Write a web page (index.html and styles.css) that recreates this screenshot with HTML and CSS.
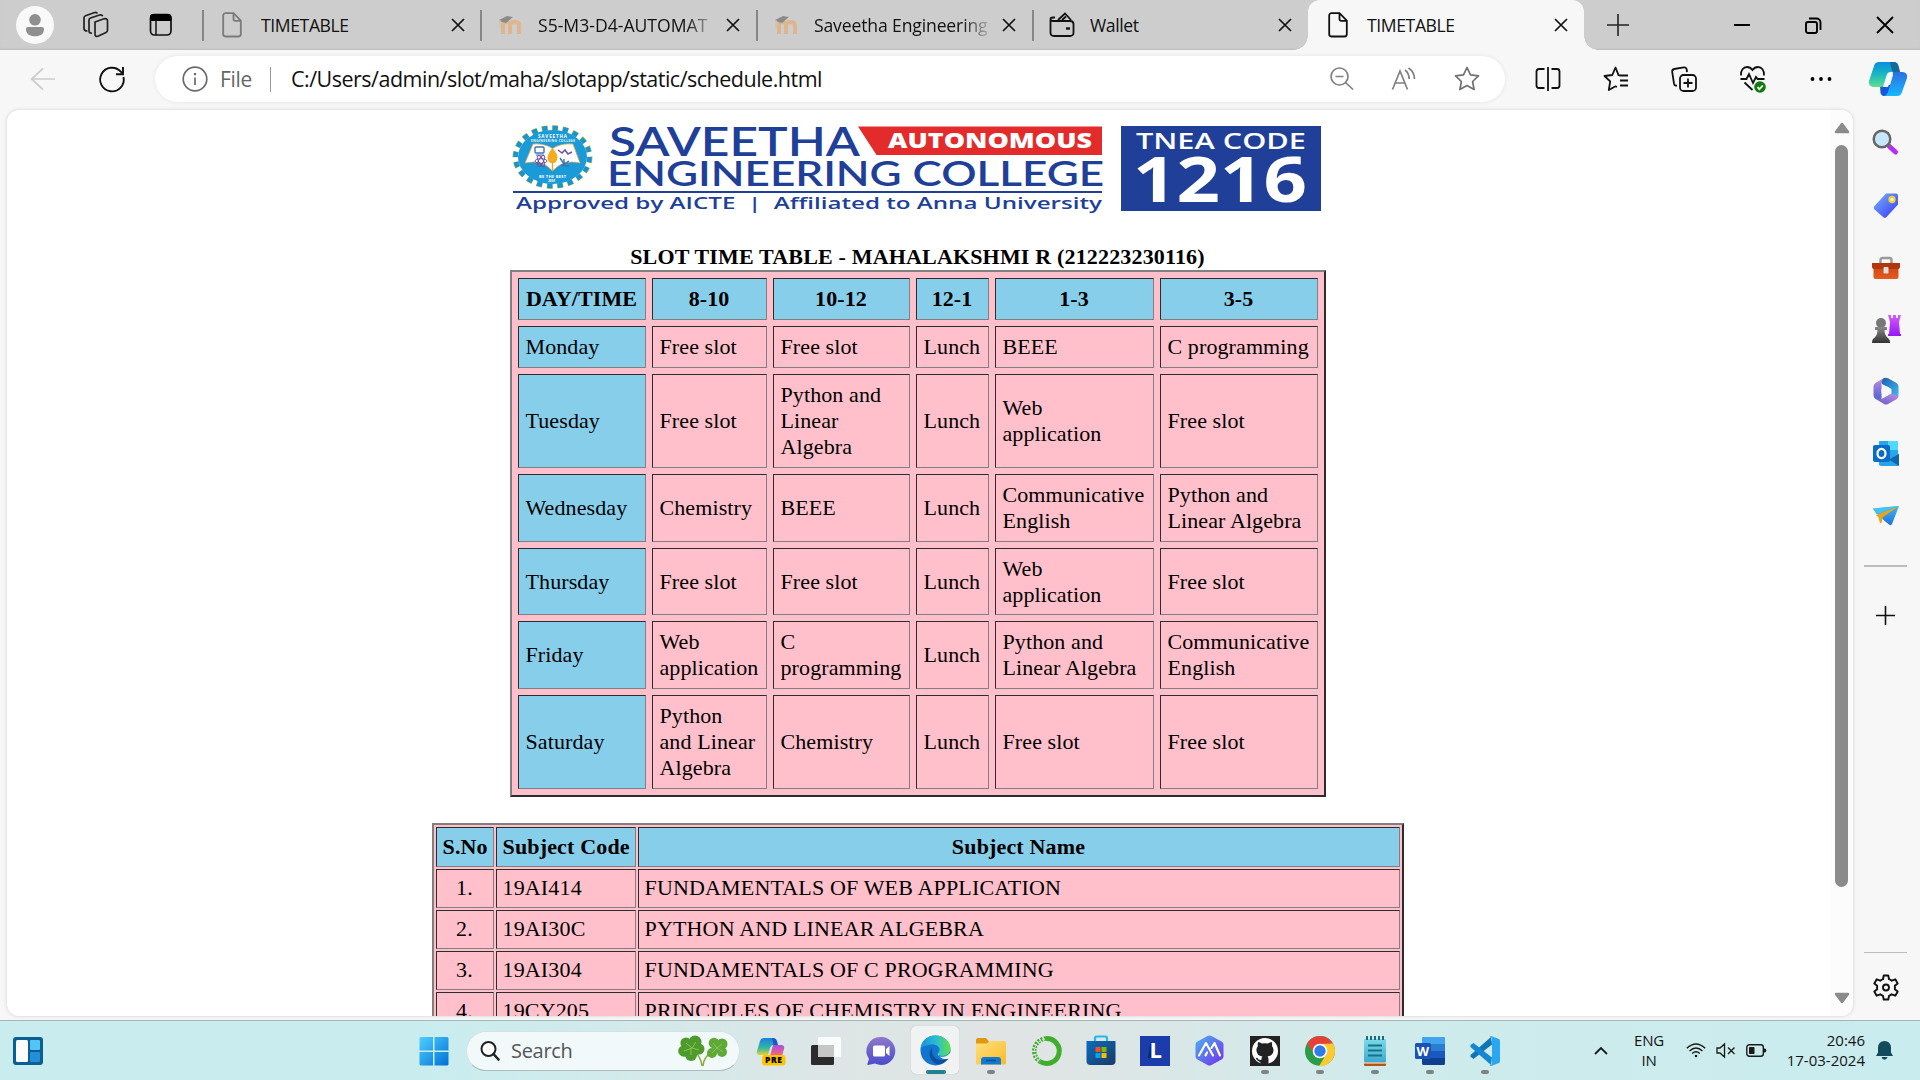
FILE: index.html
```html
<!DOCTYPE html>
<html lang="en">
<head>
<meta charset="utf-8">
<title>TIMETABLE</title>
<link rel="stylesheet" href="styles.css">
</head>
<body>
<svg class="defs" width="0" height="0" aria-hidden="true">
  <defs>
    <symbol id="close" viewBox="0 0 14 14"><path d="M1 1l12 12M13 1L1 13" fill="none" stroke="#111" stroke-width="1.7"/></symbol>
    <symbol id="page" viewBox="0 0 20 26"><path d="M3 1.2h8.500L18.800 8.500V22a2.500 2.500 0 0 1-2.500 2.500H3.500A2.500 2.500 0 0 1 1.200 22V3.500A2.300 2.300 0 0 1 3.500 1.200zM11.500 1.500V7a1.800 1.800 0 0 0 1.800 1.800h5.200" fill="none" stroke="currentColor" stroke-width="1.800"/></symbol>
    <symbol id="moodle" viewBox="0 0 26 20"><path d="M6 19V10q0-3 3.500-3t3.500 3v9M13 10q0-3 4.500-3t4.500 3v9" fill="none" stroke="#dfb58e" stroke-width="4"/><path d="M2 5l8-4 6 1-7 6-4-1z" fill="#8b8b8b"/><path d="M3 5v8" stroke="#d3bda9" stroke-width="1"/></symbol>
    <linearGradient id="gb" x1="0" y1="0" x2="1" y2="1"><stop offset="0" stop-color="#4fcfff"/><stop offset="1" stop-color="#0071d4"/></linearGradient>
    <linearGradient id="gtag" x1="0" y1="0" x2="1" y2="1"><stop offset="0" stop-color="#72b7ff"/><stop offset="1" stop-color="#3b35f0"/></linearGradient>
    <linearGradient id="gpurple" x1="0" y1="0" x2="0" y2="1"><stop offset="0" stop-color="#d35cff"/><stop offset="1" stop-color="#9618f0"/></linearGradient>
    <linearGradient id="gdark" x1="0" y1="0" x2="0" y2="1"><stop offset="0" stop-color="#888"/><stop offset="1" stop-color="#333"/></linearGradient>
    <linearGradient id="gcop1" x1="0" y1="0" x2="0" y2="1"><stop offset="0" stop-color="#0a8fdc"/><stop offset=".5" stop-color="#18b8c0"/><stop offset="1" stop-color="#5fe08c"/></linearGradient>
    <linearGradient id="gcop2" x1="0" y1="0" x2="0" y2="1"><stop offset="0" stop-color="#2b6fe0"/><stop offset="1" stop-color="#17b8ff"/></linearGradient>
    <linearGradient id="gpre1" x1="0" y1="0" x2="0" y2="1"><stop offset="0" stop-color="#1a7fe0"/><stop offset=".6" stop-color="#35b8a0"/><stop offset="1" stop-color="#f0d030"/></linearGradient>
    <linearGradient id="gpre2" x1="0" y1="0" x2="0" y2="1"><stop offset="0" stop-color="#a84fe8"/><stop offset="1" stop-color="#ff6a6a"/></linearGradient>
    <linearGradient id="gchat" x1="0" y1="0" x2="0" y2="1"><stop offset="0" stop-color="#8f78c8"/><stop offset="1" stop-color="#4a4ccc"/></linearGradient>
    <linearGradient id="gedge" x1="0" y1="0" x2="1" y2="0"><stop offset="0" stop-color="#1a8fdd"/><stop offset=".5" stop-color="#27bcd4"/><stop offset="1" stop-color="#62e04c"/></linearGradient>
    <linearGradient id="gfold" x1="0" y1="0" x2="1" y2="1"><stop offset="0" stop-color="#ffe080"/><stop offset="1" stop-color="#f9bb28"/></linearGradient>
    <linearGradient id="gstore" x1="0" y1="0" x2="1" y2="1"><stop offset="0" stop-color="#0a6cc0"/><stop offset="1" stop-color="#1b3a66"/></linearGradient>
    <linearGradient id="gam" x1="0" y1="0" x2="1" y2="1"><stop offset="0" stop-color="#4db2f5"/><stop offset="1" stop-color="#7030e8"/></linearGradient>
    <linearGradient id="gnote" x1="0" y1="0" x2="0" y2="1"><stop offset="0" stop-color="#7adbe8"/><stop offset="1" stop-color="#3fa9cc"/></linearGradient>
    <linearGradient id="gsky" x1="0" y1="0" x2="0" y2="1"><stop offset="0" stop-color="#3fb8f0"/><stop offset="1" stop-color="#2070e0"/></linearGradient>
    <linearGradient id="gbag" x1="0" y1="0" x2="0" y2="1"><stop offset="0" stop-color="#c8430f"/><stop offset="1" stop-color="#e55a20"/></linearGradient>
    <linearGradient id="gm1" x1="0" y1="0" x2="0" y2="1"><stop offset="0" stop-color="#c48be0"/><stop offset="1" stop-color="#4a60d0"/></linearGradient>
    <linearGradient id="gm2" x1="0" y1="0" x2="1" y2="1"><stop offset="0" stop-color="#1b5fae"/><stop offset="1" stop-color="#45bdf0"/></linearGradient>
    <linearGradient id="gm3" x1="0" y1="1" x2="1" y2="0"><stop offset="0" stop-color="#5b5cc8"/><stop offset="1" stop-color="#c68be0"/></linearGradient>
  </defs>
</svg>

<header class="tabstrip">
  <div class="strip-left">
    <svg class="avatar" width="38" height="38" viewBox="0 0 38 38"><circle cx="19" cy="19" r="19" fill="#f9f9f9"/><circle cx="19" cy="13.800" r="5.800" fill="#8f8f8f"/><path d="M10 23a2 2 0 0 1 2-2h14a2 2 0 0 1 2 2c0 5-3.500 7.300-9 7.300S10 28 10 23z" fill="#8f8f8f"/></svg>
    <svg class="spaces" width="28" height="28" viewBox="0 0 28 28" fill="none" stroke="#222" stroke-width="1.700"><path d="M13 11l9-3.200q3.500-.8 3.500 2v9.500q0 1.600-1.500 2.200l-7.500 3.500q-3.500 1.200-3.500-1.800z"/><path d="M10 22q-3 .5-3-2V9q0-1.500 1.500-2l9-3q2.500-.6 3.200 1.200"/><path d="M5.500 20Q2 20 2 17.500V7q0-1.700 1.500-2.300l8.500-3q2.500-.8 3.300.8"/></svg>
    <svg class="tabact" width="24" height="24" viewBox="0 0 24 24"><rect x="1.500" y="1.500" width="20.500" height="20.500" rx="4" fill="none" stroke="#111" stroke-width="1.700"/><path d="M1 8V4a3 3 0 0 1 3-3h15.500a3 3 0 0 1 3 3v4z" fill="#000"/><path d="M7 8v14" stroke="#111" stroke-width="1.500"/></svg>
  </div>
  <div class="tab first"><svg class="fav gray" width="20" height="26"><use href="#page"/></svg><span class="title">TIMETABLE</span><svg class="x" width="14" height="14"><use href="#close"/></svg></div>
  <div class="tab"><svg class="fav moodle" width="26" height="20"><use href="#moodle"/></svg><span class="title fade code">S5-M3-D4-AUTOMAT</span><svg class="x" width="14" height="14"><use href="#close"/></svg></div>
  <div class="tab"><svg class="fav moodle" width="26" height="20"><use href="#moodle"/></svg><span class="title fade college">Saveetha Engineering</span><svg class="x" width="14" height="14"><use href="#close"/></svg></div>
  <div class="tab"><svg class="fav wallet" width="26" height="26" viewBox="0 0 26 26" fill="none" stroke="#111" stroke-width="1.800"><path d="M1.500 8v12.500q0 3.500 3.500 3.500h16q3.500 0 3.500-3.500V12q0-3-3.500-3H4Q1.500 9 1.500 7q0-1.500 2.500-1.500h2"/><path d="M9 8l7-6.500L22 8M13 8l4-3.500"/><path d="M17 16.500h4" stroke-width="2.400"/></svg><span class="title">Wallet</span><svg class="x" width="14" height="14"><use href="#close"/></svg></div>
  <div class="tab active"><svg class="fav" width="20" height="26"><use href="#page"/></svg><span class="title">TIMETABLE</span><svg class="x" width="14" height="14"><use href="#close"/></svg></div>
  <div class="newtab"><svg width="22" height="22" viewBox="0 0 22 22"><path d="M11 0v22M0 11h22" stroke="#222" stroke-width="1.600"/></svg></div>
  <div class="wincontrols">
    <svg width="16" height="16" viewBox="0 0 16 16"><path d="M0 8h16" stroke="#000" stroke-width="2"/></svg>
    <svg width="17" height="17" viewBox="0 0 17 17" fill="none" stroke="#000" stroke-width="1.900"><rect x="1" y="5" width="11" height="11" rx="2"/><path d="M4 1.500h7.500a4 4 0 0 1 4 4V13"/></svg>
    <svg width="16" height="16" viewBox="0 0 16 16"><path d="M0 0l16 16M16 0L0 16" stroke="#000" stroke-width="1.800"/></svg>
  </div>
</header>

<div class="toolbar">
  <svg class="back" width="26" height="24" viewBox="0 0 26 24" fill="none" stroke="#cdcdcd" stroke-width="1.700"><path d="M13 1.500L1.500 12 13 22.500M1.500 12H25"/></svg>
  <svg class="reload" width="26" height="26" viewBox="0 0 26 26" fill="none" stroke="#111" stroke-width="1.900"><path d="M24.500 11a11.800 11.800 0 1 1-2.700-5.300L23.800 8"/><path d="M24 1v7.200h-7"/></svg>
  <div class="address">
    <svg class="info" width="26" height="26" viewBox="0 0 26 26" fill="none" stroke="#6b6b6b" stroke-width="1.700"><circle cx="13" cy="13" r="11.800"/><path d="M13 11.500v7.500"/><path d="M13 7v2.200" stroke-width="2.200"/></svg>
    <span class="file">File</span><span class="vsep"></span><span class="url">C:/Users/admin/slot/maha/slotapp/static/schedule.html</span>
    <div class="addr-icons">
      <svg width="24" height="24" viewBox="0 0 24 24" fill="none" stroke="#808080" stroke-width="1.700"><circle cx="9.500" cy="9.500" r="8.500"/><path d="M15.500 15.500l7.500 7M5.500 9.500h8"/></svg>
      <svg width="26" height="24" viewBox="0 0 26 24" fill="none" stroke="#808080" stroke-width="1.700"><path d="M1.500 22.500L9 4l7.500 18.500M4.200 16h9.600M14 3q4 3 4.200 9M17.500 1q6 4 6 11"/></svg>
      <svg width="26" height="26" viewBox="0 0 26 26" fill="none" stroke="#707070" stroke-width="1.700" stroke-linejoin="round"><path d="M13 1.500l3.500 7.300 8 1.100-5.900 5.600 1.500 8L13 19.600 5.900 23.500l1.500-8L1.500 9.900l8-1.100z"/></svg>
    </div>
  </div>
  <div class="tools">
    <svg width="26" height="26" viewBox="0 0 26 26" fill="none" stroke="#111" stroke-width="1.800"><path d="M9.500 3H4Q1.500 3 1.500 5.500v14Q1.500 22 4 22h5.500M16.500 3H22q2.500 0 2.500 2.500v14Q24.500 22 22 22h-5.500M13 1v24"/></svg>
    <svg width="26" height="26" viewBox="0 0 26 26" fill="none" stroke="#111" stroke-width="1.800" stroke-linejoin="round"><path d="M17.500 9.500l-2-.3L12.500 1.500 9.300 9 1.500 10l5.700 5.400L5.800 24l6.700-3.700L14 21M17 9.500h8M17 14.500h8M17 19.500h8"/></svg>
    <svg width="26" height="26" viewBox="0 0 26 26" fill="none" stroke="#111" stroke-width="1.800"><rect x="9" y="9" width="16" height="16" rx="3.500"/><path d="M17 12.500v9M12.500 17h9M6 19.500q-2.500.5-3-2L1.200 6q-.3-2.500 2-3l9.500-1.600q2.500-.3 3 2l.3 2.800"/></svg>
    <svg width="28" height="28" viewBox="0 0 28 28" fill="none" stroke="#111" stroke-width="1.800"><path d="M2 10.500C1.500 5 4.500 2 8 2q3.500 0 5.500 3Q15.500 2 19 2c3.500 0 6.500 3 6 8.500M1.500 14h6l2.500-5 4 9 3-6 1.500 2h7M5.500 17.500l8 7.500"/><circle cx="21" cy="22" r="5.800" fill="#107c10" stroke="none"/><path d="M18.500 22.200l1.900 1.900 3.400-3.600" stroke="#fff"/></svg>
    <svg width="24" height="24" viewBox="0 0 24 24"><circle cx="3.500" cy="12" r="1.900"/><circle cx="12" cy="12" r="1.900"/><circle cx="20.500" cy="12" r="1.900"/></svg>
    <svg class="copilot" width="38" height="36" viewBox="0 0 38 36"><path d="M11 24h15l-4 9q-1.500 2-4 2h-4q-2-1-2.500-3z" fill="#1958d8"/><path d="M10 1h15q3 0 4 3l2 7h-8q-3 0-4.500 4l-3 9q-1 2-4 2H4q-5-1-4-6L5 5q1-4 5-4z" fill="url(#gcop1)"/><path d="M21 11h13q5 1 4 6l-5 14q-1 4-5 4H15q3-1 4-4l5-17q0-3-3-3z" fill="url(#gcop2)"/><path d="M18 13q1-2 4-2h2l-5 15h-5z" fill="#f5f9ff"/><path d="M21 1h5q3 1 3.500 4l1.500 6h-6q-2 0-2.500-3z" fill="#146a9c"/></svg>
  </div>
</div>

<div class="main">
  <div class="viewport">
    <main class="doc">
      <svg class="banner" width="810" height="90" viewBox="514 125 810 90">
        <ellipse cx="553.500" cy="157" rx="37.200" ry="29" fill="none" stroke="#8fc04a" stroke-width="5.500" stroke-dasharray="5.700 4.700"/>
        <ellipse cx="553.500" cy="157" rx="37" ry="29" fill="none" stroke="#1c93cf" stroke-width="4.500" stroke-dasharray="5.200 5.200"/>
        <ellipse cx="553.500" cy="157" rx="34.500" ry="27" fill="#1a9ad6"/>
        <path d="M534 144q11-1 19.500 4.500Q562 143 574 144l7 19q-17-4-27.500 8-10-12-27.500-8z" fill="#fff" stroke="#d9a24f" stroke-width=".8"/>
        <path d="M553.500 149v22" stroke="#e9a21b" stroke-width="1.300"/><path d="M553.500 148q5 6 5 9 0 4-3 6h-4q-3-2-3-6 0-3 5-9z" fill="#f3ab20"/>
        <rect x="536" y="147" width="9" height="6" rx="1" fill="none" stroke="#3c72b8" stroke-width="1.400"/><path d="M537 155h8" stroke="#3c72b8"/>
        <g fill="none" stroke="#7050a0"><ellipse cx="542" cy="161" rx="6" ry="2.300"/><ellipse cx="542" cy="161" rx="6" ry="2.300" transform="rotate(60 542 161)"/><ellipse cx="542" cy="161" rx="6" ry="2.300" transform="rotate(120 542 161)"/><path d="M559 150l4 3 3-3 3 4 4-2" stroke-width="1.500"/><path d="M561 158l4 6 5-3M562 165l8 1M565 159v7" stroke="#3c72b8" stroke-width="1.400"/></g>
        <g fill="#fff" font-family="Open Sans, sans-serif" font-weight="700"><text x="539" y="138" font-size="4.600" textLength="29">SAVEETHA</text><text x="532" y="142.400" font-size="3" textLength="44">ENGINEERING COLLEGE</text><text x="540" y="177.500" font-size="4" textLength="27">BE THE BEST</text><text x="549" y="182" font-size="3.200">2001</text></g>
        <g fill="#203f99" font-family="Lato, sans-serif">
          <text x="610" y="156.300" font-size="41" font-weight="600" textLength="251" lengthAdjust="spacingAndGlyphs">SAVEETHA</text>
          <text x="608" y="186" font-size="34" font-weight="600" textLength="497" lengthAdjust="spacingAndGlyphs">ENGINEERING COLLEGE</text>
        </g>
        <path d="M859 126.500h244V155H877.500z" fill="#e32b2b"/>
        <text x="889" y="148" fill="#fff" font-family="Open Sans, sans-serif" font-size="20.500" font-weight="800" textLength="204" lengthAdjust="spacingAndGlyphs">AUTONOMOUS</text>
        <path d="M514 192h589" stroke="#203f99" stroke-width="2"/>
        <text x="517" y="209" fill="#203f99" font-family="Open Sans, sans-serif" font-size="16" font-weight="600" textLength="586" lengthAdjust="spacingAndGlyphs" xml:space="preserve">Approved by AICTE  |  Affiliated to Anna University</text>
        <rect x="1122" y="126" width="200" height="85" fill="#203f99"/>
        <text x="1137" y="149" fill="#fff" font-family="Open Sans, sans-serif" font-size="21" font-weight="600" textLength="170" lengthAdjust="spacingAndGlyphs">TNEA CODE</text>
        <text x="1134" y="201.500" fill="#fff" font-family="Open Sans, sans-serif" font-size="62" font-weight="700" textLength="174" lengthAdjust="spacingAndGlyphs">1216</text>
      </svg>
      <h1 class="caption">SLOT TIME TABLE - MAHALAKSHMI R (212223230116)</h1>
      <table class="slots">
        <colgroup><col class="c1"><col class="c2"><col class="c3"><col class="c4"><col class="c5"><col class="c6"></colgroup>
        <tr class="h1"><th>DAY/TIME</th><th>8-10</th><th>10-12</th><th>12-1</th><th>1-3</th><th>3-5</th></tr>
        <tr class="h1"><td class="day">Monday</td><td>Free slot</td><td>Free slot</td><td>Lunch</td><td>BEEE</td><td>C programming</td></tr>
        <tr class="h3"><td class="day">Tuesday</td><td>Free slot</td><td>Python and<br>Linear<br>Algebra</td><td>Lunch</td><td>Web<br>application</td><td>Free slot</td></tr>
        <tr class="h2"><td class="day">Wednesday</td><td>Chemistry</td><td>BEEE</td><td>Lunch</td><td>Communicative<br>English</td><td>Python and<br>Linear Algebra</td></tr>
        <tr class="h2 thu"><td class="day">Thursday</td><td>Free slot</td><td>Free slot</td><td>Lunch</td><td>Web<br>application</td><td>Free slot</td></tr>
        <tr class="h2"><td class="day">Friday</td><td>Web<br>application</td><td>C<br>programming</td><td>Lunch</td><td>Python and<br>Linear Algebra</td><td>Communicative<br>English</td></tr>
        <tr class="h3"><td class="day">Saturday</td><td>Python<br>and Linear<br>Algebra</td><td>Chemistry</td><td>Lunch</td><td>Free slot</td><td>Free slot</td></tr>
      </table>
      <table class="subjects">
        <colgroup><col class="s1"><col class="s2"><col class="s3"></colgroup>
        <tr class="head"><th>S.No</th><th>Subject Code</th><th>Subject Name</th></tr>
        <tr><td>1.</td><td>19AI414</td><td>FUNDAMENTALS OF WEB APPLICATION</td></tr>
        <tr><td>2.</td><td>19AI30C</td><td>PYTHON AND LINEAR ALGEBRA</td></tr>
        <tr><td>3.</td><td>19AI304</td><td>FUNDAMENTALS OF C PROGRAMMING</td></tr>
        <tr><td>4.</td><td>19CY205</td><td>PRINCIPLES OF CHEMISTRY IN ENGINEERING</td></tr>
      </table>
    </main>
    <div class="scrollbar">
      <svg width="16" height="12" viewBox="0 0 16 12"><path d="M8 2l6 8H2z" fill="#8b8b8b" stroke="#8b8b8b" stroke-width="2.500" stroke-linejoin="round"/></svg>
      <div class="thumb"></div>
      <svg width="16" height="12" viewBox="0 0 16 12"><path d="M8 10l6-8H2z" fill="#8b8b8b" stroke="#8b8b8b" stroke-width="2.500" stroke-linejoin="round"/></svg>
    </div>
  </div>
  <aside class="sidebar">
    <div class="apps">
      <svg width="28" height="28" viewBox="0 0 28 28"><path d="M17.500 18.500l6 5.500" stroke="#b62df5" stroke-width="5" stroke-linecap="round"/><path d="M15 15l3 3" stroke="#777" stroke-width="3"/><circle cx="10" cy="11" r="8.300" fill="#c6e6fb" stroke="#666" stroke-width="2.500"/></svg>
      <svg width="28" height="28" viewBox="0 -1.500 28 28"><path d="M14 2h10q2 0 2 2v9L14.500 25.500q-1.700 1.700-3.400 0L2.500 18q-1.700-1.700 0-3.400z" fill="url(#gtag)"/><circle cx="20" cy="8" r="2.700" fill="#e8f0ff" stroke="#f6cf2c" stroke-width="2"/></svg>
      <svg width="30" height="28" viewBox="0 -2 30 28"><path d="M9.500 9V6q0-2 2-2h7q2 0 2 2v3" fill="none" stroke="#9a9a9a" stroke-width="2.400"/><rect x="2.500" y="9" width="25" height="16" rx="2" fill="url(#gbag)"/><path d="M1 9h28v4q0 2-2 2H3q-2 0-2-2z" fill="#b3370d"/><rect x="12.500" y="13" width="5" height="6.500" rx="1" fill="#ddd"/></svg>
      <svg width="30" height="30" viewBox="0 -1 30 30"><path d="M17 1h3v3h2V1h3v3h2V1h3l-2 7 1 12h1v2H17v-2h1l1-12z" fill="url(#gpurple)"/><circle cx="10" cy="9" r="5" fill="#777"/><path d="M4 13h12v3h-2.500q0 6 4.500 9 1 1 1 4H1q0-3 1-4 4.500-3 4.500-9H4z" fill="url(#gdark)"/></svg>
      <svg width="28" height="28" viewBox="0 0 28 28"><path d="M12 1L3.500 6Q1.500 7.500 1.500 9.500v9q0 2 2 3.200l3 1.600q4-1 3-5V6z" fill="url(#gm1)"/><path d="M12 1q2-.8 4 .3l8.500 4.700q2 1.200 2 3.500V19l-7 2v-9l-9.500-5q-1-4 2-6z" fill="url(#gm2)"/><path d="M3 21.500h7.500l9-5 7 2.500q0 2-2 3.200L16 27q-2 1-4 0z" fill="url(#gm3)"/><circle cx="14" cy="14" r="4.600" fill="#f7f7f7"/></svg>
      <svg width="28" height="28" viewBox="0 0 28 28"><rect x="7" y="2" width="19" height="18" rx="1" fill="#28a8ea"/><path d="M16 2h9q1 0 1 1v8H16z" fill="#50d9ff"/><path d="M7 15h20v10q0 2-2 2H9q-2 0-2-2z" fill="#23a5e8"/><path d="M27 15L17 20.500 27 27z" fill="#1066a8"/><rect x="1" y="6" width="17" height="17" rx="2" fill="#0a6cc8"/><ellipse cx="9.500" cy="14.500" rx="4" ry="4.600" fill="none" stroke="#fff" stroke-width="2.200"/></svg>
      <svg width="28" height="28" viewBox="0 0 28 28"><path d="M1 7.500L27 5l-7 18q-1 2-3 .5l-5-4z" fill="url(#gsky)"/><path d="M4 14l23-9-16 11-1.500 6q-1.500 1-2-1.500l-1-4z" fill="#eaa41c"/><path d="M1 7.500L27 5 4.500 13.500z" fill="#46c2f2"/></svg>
    </div>
    <div class="rule"></div>
    <svg class="plus" width="19" height="19" viewBox="0 0 19 19"><path d="M9.500 0v19M0 9.500h19" stroke="#111" stroke-width="1.600"/></svg>
    <div class="rule thin"></div>
    <svg class="gear" width="28" height="28" viewBox="0 0 28 28" fill="none" stroke="#111" stroke-width="1.900" stroke-linejoin="round"><path d="M11.700 1.500h4.600l.7 3.700q1.500.5 2.700 1.500l3.600-1.400 2.400 4.100-2.900 2.400q.3 1.700 0 3.400l2.900 2.400-2.400 4.100-3.600-1.400q-1.200 1-2.700 1.500l-.7 3.700h-4.600l-.7-3.700q-1.500-.5-2.700-1.500l-3.600 1.400-2.400-4.100 2.900-2.400q-.3-1.700 0-3.400L2.300 9.400l2.400-4.100 3.600 1.400q1.200-1 2.700-1.500z"/><circle cx="14" cy="13.500" r="3"/></svg>
  </aside>
</div>

<footer class="taskbar">
  <svg class="widgets" width="30" height="28" viewBox="0 0 30 28"><rect width="30" height="28" rx="3" fill="#0d5f92"/><rect x="3" y="3" width="12" height="22" rx="1.500" fill="#fff"/><rect x="17" y="3" width="10" height="10" rx="1" fill="#53c4f7"/><rect x="17" y="15" width="10" height="10" rx="1" fill="#2190d8"/></svg>
  <svg class="start" width="30" height="30" viewBox="0 0 30 30"><path d="M1.500 1H14v13.500H.5V2zM15.500 1H28.500l1 1v12.500h-14zM.5 16H14v13.500H1.500l-1-1zM15.500 16h14v12.500l-1 1h-13z" fill="url(#gb)"/></svg>
  <div class="search">
    <svg width="20" height="20" viewBox="0 0 20 20"><circle cx="8.500" cy="8" r="7" fill="#fff" stroke="#222" stroke-width="2"/><path d="M13.500 13l5 5.500" stroke="#222" stroke-width="2.600" stroke-linecap="round"/></svg>
    <span>Search</span>
    <svg class="clover" width="50" height="32" viewBox="0 0 50 32"><path d="M15 14q8 8 9 17M35 15q-10 8-10 16" fill="none" stroke="#8aae3e" stroke-width="1.600"/><g fill="#4f9a2c"><circle cx="8" cy="8" r="5.600"/><circle cx="17" cy="7" r="6.500"/><circle cx="6" cy="16" r="5.800"/><circle cx="21" cy="14" r="5.500"/><circle cx="13" cy="20" r="6"/><path d="M8 8h10v10H8z"/></g><g fill="#5faa36"><circle cx="36" cy="8" r="5.300"/><circle cx="44" cy="9" r="5.500"/><circle cx="44" cy="17" r="5"/><circle cx="34" cy="18" r="5"/><path d="M36 9h8v8h-8z"/></g><path d="M8 8l6 5 4-6M6 16l8-3 7 2M13 13v7M35 8l4 5 5-4M34 18l5-5 6 4" stroke="#86c653" fill="none"/></svg>
  </div>
  <nav class="pins">
    <div class="pin"><svg width="30" height="30" viewBox="0 0 30 30"><path d="M8 2h9q3 0 4 3l1 4h-5q-2 0-3 3l-2 7H4q-4 0-3-4L4 5q1-3 4-3z" fill="url(#gpre1)"/><path d="M16 2q4 0 5 4l1 4h-4z" fill="#2052c8"/><path d="M17 9h9q3 1 2 4l-2 7H14z" fill="url(#gpre2)"/><rect x="6" y="19" width="23.500" height="10.500" rx="3" fill="#ffc400"/><text x="9" y="27.200" font-family="Open Sans, sans-serif" font-size="8.500" font-weight="800" textLength="17">PRE</text></svg></div>
    <div class="pin"><svg width="30" height="30" viewBox="0 0 30 30"><rect x="0" y="9" width="23" height="20" rx="1.500" fill="#2b2b2b"/><rect x="7" y="1" width="23" height="20" rx="1.500" fill="#fff" opacity=".85"/><rect x="7" y="9" width="16" height="12" fill="#c6c6c6"/></svg></div>
    <div class="pin"><svg width="30" height="30" viewBox="0 0 30 30"><path d="M15 1a14 14 0 1 1-6 26.500L2 29q-1 0-.5-1.500L3 23A14 14 0 0 1 15 1z" fill="url(#gchat)"/><rect x="7" y="9.500" width="12" height="11" rx="1.500" fill="#fff"/><path d="M20 13l3.500-3v10L20 17z" fill="#fff"/></svg></div>
    <div class="pin current"><svg width="31" height="31" viewBox="0 0 31 31"><circle cx="15.500" cy="15.500" r="15" fill="#1276d0"/><path d="M.6 14C1 6 7 .5 15.500.5c8 0 15 5.500 15 13 0 4.500-3.500 7.500-8 7.500-3 0-4.500-1.300-4.500-2.500s1.500-1.500 1.500-4c0-2.800-3-5-7-5C6.500 9.500 1.500 12 .6 14z" fill="url(#gedge)"/><path d="M12 13c-5 5-2 14 6 16.500 4-.3 8-2.500 10.500-6-7 3.500-15.500 1-16.500-6.500-.2-1.500 0-3 0-4z" fill="#0c4f9c"/><path d="M18 18.300c-1 1.200 1 4 5.500 3.500 3-.3 5.500-2.300 6.500-4h1.500l-1 5-2 .8c-4 1.500-9.500-.3-10.500-5.300z" fill="#f1f3f3"/></svg><i></i></div>
    <div class="pin open"><svg width="30" height="30" viewBox="0 0 30 30"><path d="M0 4q0-2 2-2h8l3 3.500V9H0z" fill="#dd9a10"/><path d="M0 7.500h11L13.500 5H28q2 0 2 2v20q0 1.500-2 1.500H2q-2 0-2-1.500z" fill="url(#gfold)"/><path d="M5 28.500V24q0-3 3-3h14q3 0 3 3v4.500z" fill="#1479d2"/><path d="M10 24.500h10" stroke="#0a4e91" stroke-width="1.500"/></svg><i></i></div>
    <div class="pin"><svg width="30" height="30" viewBox="0 0 30 30" fill="none"><path d="M15 2.500a12.500 12.500 0 1 1-6 23" stroke="#3fae2a" stroke-width="5"/><path d="M15 2.500A12.500 12.500 0 0 0 9 25.500" stroke="#3fae2a" stroke-width="4.500" stroke-dasharray="2 1.300"/><path d="M14 3A12.500 12.500 0 0 0 8 25" stroke="#dfe5e4" stroke-width="1" stroke-dasharray="3 2"/></svg></div>
    <div class="pin"><svg width="30" height="31" viewBox="0 0 30 31"><path d="M9 7V3q0-1.500 1.500-1.500h9Q21 1.500 21 3v4" fill="none" stroke="#24b8ee" stroke-width="2.200"/><path d="M.5 6h29v20q0 4-4 4h-21q-4 0-4-4z" fill="url(#gstore)"/><path d="M9.500 12h5v5h-5z" fill="#f25022"/><path d="M15.500 12h5v5h-5z" fill="#7fba00"/><path d="M9.500 18h5v5h-5z" fill="#00a4ef"/><path d="M15.500 18h5v5h-5z" fill="#ffb900"/></svg></div>
    <div class="pin"><svg width="30" height="30" viewBox="0 0 30 30"><rect width="30" height="30" fill="#1b3caa"/><path d="M8 22l3-17v17z" fill="#0c2463"/><text x="9.500" y="22" fill="#fff" font-family="Open Sans, sans-serif" font-size="22" font-weight="700">L</text></svg></div>
    <div class="pin"><svg width="29" height="31" viewBox="0 0 29 31"><path d="M12.500 1q2-1 4 0l10 5.500q2 1 2 3v12q0 2-2 3l-10 5.500q-2 1-4 0l-10-5.500q-2-1-2-3v-12q0-2 2-3z" fill="url(#gam)"/><path d="M4 20.500L11 8l7 12.500M10.500 20.500l1.500-3M16.500 13l3-5 5.500 12.500" fill="none" stroke="#fff" stroke-width="2.100" stroke-linecap="round" stroke-linejoin="round"/></svg></div>
    <div class="pin open"><svg width="30" height="30" viewBox="0 0 30 30"><rect width="30" height="30" fill="#222"/><circle cx="15" cy="15" r="13" fill="#fff"/><path d="M11.500 28v-4q-4 1-6-3M18.500 28v-5q0-1.500-1-2.500 6-1 6-6.500 0-2-1.500-4 .5-2-.3-4-2 .3-3.800 1.500-3-.7-6 0Q10 6.300 8.200 6q-.8 2-.3 4-1.500 2-1.500 4 0 5.500 6 6.500-1 1-1 2.500v5z" fill="#222"/><path d="M11.800 24.500q-4 .8-5.300-2.500" fill="none" stroke="#222" stroke-width="1.500"/></svg><i></i></div>
    <div class="pin open"><svg width="30" height="30" viewBox="0 0 30 30"><circle cx="15" cy="15" r="15" fill="#2a9d48"/><path d="M2 7.500A15 15 0 0 1 28 7.500L15 8.500 9 18z" fill="#e44236"/><path d="M28 7.500A15 15 0 0 1 14 30l7.500-12L15 8z" fill="#fdc930"/><circle cx="15" cy="15" r="7.300" fill="#fff"/><circle cx="15" cy="15" r="5.700" fill="#2f7be8"/></svg><i></i></div>
    <div class="pin open"><svg width="24" height="30" viewBox="0 0 24 30"><rect x="1" y="26" width="22" height="4" rx="1" fill="#b35510"/><path d="M1 3h22v22q0 1.500-1.500 1.500h-19Q1 26.500 1 25z" fill="url(#gnote)"/><path d="M1 26.500h22v1H1z" fill="#fff"/><path d="M4 0v4M8 0v4M12 0v4M16 0v4M20 0v4" stroke="#186a80" stroke-width="2"/><path d="M5 9.500h14M5 14.500h14M5 19.500h14" stroke="#15728b" stroke-width="2"/></svg><i></i></div>
    <div class="pin open"><svg width="30" height="28" viewBox="0 0 30 28"><rect x="7" width="23" height="28" rx="2" fill="#185abd"/><path d="M7 7V2q0-2 2-2h19q2 0 2 2v5z" fill="#41a5ee"/><path d="M7 7h23v7H7z" fill="#2b7cd3"/><path d="M7 21h23v5q0 2-2 2H9q-2 0-2-2z" fill="#103f91"/><rect y="6" width="16" height="16" rx="1.500" fill="#1a53b5"/><text x="1.500" y="19" fill="#fff" font-family="Open Sans, sans-serif" font-size="13" font-weight="700">W</text></svg><i></i></div>
    <div class="pin open"><svg width="30" height="30" viewBox="0 0 30 30"><path d="M22 8.500L3.500 23 .5 20.800V19L21 1z" fill="#0f74b8"/><path d="M22 21.500L3.500 7 .5 9v2L21 29z" fill="#1487d2"/><path d="M21 0l8 3q1 .5 1 2v20q0 1.500-1 2l-8 3q-1 0-1.500-1 2.500.5 2.500-2V3q0-2.500-2.500-2z" fill="#2aa7f0"/></svg><i></i></div>
  </nav>
  <div class="tray">
    <svg class="chev" width="14" height="8" viewBox="0 0 14 8"><path d="M1 7l6-6 6 6" fill="none" stroke="#1a1a1a" stroke-width="1.800"/></svg>
    <div class="lang"><span>ENG</span><span>IN</span></div>
    <svg class="wifi" width="20" height="15" viewBox="0 0 20 15" fill="none" stroke="#1a1a1a" stroke-width="1.400"><path d="M.8 5.300q9.200-8.600 18.400 0M3.500 8q6.500-6 13 0M6.200 10.500q3.800-3.400 7.600 0"/><circle cx="10" cy="13" r="1.300" fill="#1a1a1a" stroke="none"/></svg>
    <svg class="spk" width="20" height="15" viewBox="0 0 20 15" fill="none" stroke="#1a1a1a" stroke-width="1.300"><path d="M1 5h3l4.500-4v13L4 10H1zM12 4.500l6.500 6.500M18.500 4.500L12 11"/></svg>
    <svg class="bat" width="21" height="13" viewBox="0 0 21 13"><rect x=".8" y=".8" width="16.500" height="11.400" rx="2.500" fill="none" stroke="#1a1a1a" stroke-width="1.400"/><rect x="3" y="3" width="5.500" height="7" rx=".8" fill="#1a1a1a"/><path d="M18 4.500h1q1.300.3 1.300 2t-1.300 2h-1z" fill="#1a1a1a"/></svg>
    <div class="clock"><span>20:46</span><span>17-03-2024</span></div>
    <svg class="bell" width="17" height="19" viewBox="0 0 17 19"><path d="M8.500 0q6 0 6.500 6.500v5l2 3.500H0l2-3.500v-5Q2.500 0 8.500 0zM5.500 16h6q-.7 2.700-3 2.700t-3-2.700z" fill="#144a5c"/></svg>
  </div>
</footer>
</body>
</html>
```
FILE: styles.css
```css
* { box-sizing: border-box; }
body { margin: 0; width: 1920px; height: 1080px; overflow: hidden; display: flex; flex-direction: column; background: #f7f7f7; font-family: "Open Sans", sans-serif; color: #111; }
svg { display: block; flex: none; overflow: visible; }
svg.defs { position: absolute; overflow: hidden; }

/* tab strip */
.tabstrip { display: flex; height: 50px; background: #cdcdcd; flex: none; box-shadow: inset 0 -2px 2px -1px #bcbcbc; }
.strip-left { width: 202px; display: flex; align-items: center; padding-left: 16px; }
.spaces { margin-left: 28px; }
.tabact { margin-left: 39px; }
.tab { width: 276px; display: flex; align-items: center; position: relative; padding-left: 17px; color: #111; }
.tab.first { width: 278px; padding-left: 20px; }
.tab:not(.active)::before { content: ""; position: absolute; left: 0; top: 10px; width: 2px; height: 31px; background: #878787; }
.tab.active { background: #f7f7f7; border-radius: 12px 12px 0 0; padding-left: 20px; z-index: 1; }
.tab.active::before, .tab.active::after { content: ""; position: absolute; bottom: 0; width: 14px; height: 14px; }
.tab.active::before { left: -14px; background: radial-gradient(circle at 0 0, transparent 13.500px, #f7f7f7 14px); }
.tab.active::after { right: -14px; background: radial-gradient(circle at 100% 0, transparent 13.500px, #f7f7f7 14px); }
.fav { width: 20px; }
.fav.gray { color: #7a7a7a; }
.fav.moodle, .fav.wallet { width: 26px; }
.title { font-size: 17.600px; line-height: 24px; white-space: nowrap; margin-left: 19px; width: 180px; letter-spacing: -0.4px; }
.moodle + .title, .wallet + .title { margin-left: 15px; width: 176px; }
.title.code { letter-spacing: 0; }
.title.college { letter-spacing: -0.15px; }
.title.fade { -webkit-mask-image: linear-gradient(90deg, #000 84%, transparent 102%); mask-image: linear-gradient(90deg, #000 84%, transparent 102%); }
.x { margin-left: 12px; }
.first .x { margin-left: 10px; }
.active .x { margin-left: 7px; }
.newtab { width: 68px; display: flex; align-items: center; justify-content: center; }
.wincontrols { margin-left: auto; display: flex; align-items: center; gap: 55px; padding-right: 27px; }

/* toolbar */
.toolbar { height: 60px; flex: none; display: flex; align-items: center; padding-bottom: 2px; }
.back { margin-left: 30px; }
.reload { margin-left: 43px; }
.address { margin-left: 30px; width: 1350px; height: 46px; border-radius: 23px; background: #fff; display: flex; align-items: center; padding-left: 27px; box-shadow: 0 0 4px #e4e4e4; }
.file { margin-left: 12px; font-size: 21px; width: 38px; color: #666; letter-spacing: -0.3px; }
.vsep { width: 1px; height: 25px; background: #999; margin-left: 12px; }
.url { margin-left: 20px; font-size: 21.500px; letter-spacing: -0.5px; white-space: nowrap; padding-bottom: 1px; }
.addr-icons { display: flex; margin-left: auto; align-items: center; gap: 37px; padding-right: 25px; }
.tools { display: flex; align-items: center; gap: 42px; margin-left: 30px; }
.copilot { margin-left: -6px; }

/* browser body */
.main { display: flex; height: 910px; flex: none; }
.viewport { margin-left: 7px; width: 1846px; height: 906px; background: #fff; border-radius: 12px; overflow: hidden; display: flex; box-shadow: 0 0 3px 1px #dfdfdf; }
.doc { width: 1823px; padding-right: 2px; display: flex; flex-direction: column; align-items: center; font: 22px/26px "Liberation Serif", "Times New Roman", serif; color: #000; }
.banner { margin-top: 15px; }
.caption { font-size: 22px; line-height: 26px; margin: 29px 0 0; font-weight: 700; white-space: nowrap; letter-spacing: 0.17px; }
table { table-layout: fixed; background: #ffc0cb; border: 2px solid; border-color: #808080 #2c2c2c #2c2c2c #808080; border-collapse: separate; flex: none; }
th, td { border: 1px solid; border-color: #2c2c2c #808080 #808080 #2c2c2c; text-align: left; vertical-align: middle; white-space: nowrap; }
th { background: #87ceeb; text-align: center; }
.day { background: #87ceeb; }
.slots { width: 816px; border-spacing: 6px; margin-top: 0; letter-spacing: 0.1px; }
.slots th, .slots td { padding: 6px 7px; }
.c1 { width: 128px; } .c2 { width: 115px; } .c3 { width: 137px; } .c4 { width: 73px; } .c5 { width: 159px; } .c6 { width: 158px; }
.h1 { height: 42px; } .h2 { height: 68px; } .h2.thu { height: 67px; } .h3 { height: 94px; }
.subjects { width: 972px; border-spacing: 2px; margin-top: 26px; letter-spacing: 0.16px; }
.subjects th, .subjects td { padding: 0 6px; }
.subjects td { padding-bottom: 2px; }
.subjects td:first-child { text-align: center; }
.s1 { width: 58px; } .s2 { width: 140px; } .s3 { width: 762px; }
.subjects tr { height: 39px; }
.subjects .head { height: 40px; }
.scrollbar { width: 23px; background: #fcfcfc; display: flex; flex-direction: column; align-items: center; padding-top: 12px; }
.thumb { width: 13px; height: 742px; border-radius: 7px; background: #8b8b8b; margin: 11px 0 105px; }

/* side bar */
.sidebar { flex: 1; display: flex; flex-direction: column; align-items: center; padding-right: 2px; }
.apps { display: flex; flex-direction: column; justify-content: space-between; align-items: center; height: 401px; margin-top: 18px; }
.rule { width: 43px; height: 2px; background: #bdbdbd; margin-top: 36px; }
.plus { margin-top: 39px; }
.rule.thin { height: 1px; margin-top: 327px; }
.gear { margin-top: 21px; }

/* task bar */
.taskbar { height: 60px; flex: none; display: flex; align-items: center; border-top: 1px solid #a5b4b5; background: linear-gradient(90deg, #c9edef 0, #c9edef 22%, #dde6e6 43%, #e1e4e4 53%, #cfebec 73%, #c9ecee 100%); }
.widgets { margin-left: 13px; }
.start { margin-left: 376px; }
.search { margin-left: 17px; width: 274px; height: 40px; border-radius: 20px; background: #f2f9fa; border: 1px solid #d3e3e4; border-bottom-color: #a9bdbf; display: flex; align-items: center; padding: 0 11px 0 13px; }
.search span { margin-left: 11px; font-size: 20px; color: #555; letter-spacing: -0.3px; }
.clover { margin-left: auto; }
.pins { display: flex; margin-left: 3px; height: 59px; }
.pin { width: 55px; height: 59px; display: flex; align-items: center; justify-content: center; position: relative; flex: none; }
.pin:nth-child(8) { width: 54px; }
.pin i { position: absolute; bottom: 6px; left: 50%; width: 8px; height: 4px; margin-left: -4px; border-radius: 2px; background: #7c8484; }
.pin.current::before { content: ""; position: absolute; left: 3px; top: 5px; width: 48px; height: 48px; border-radius: 5px; background: #f1f3f3; box-shadow: 0 0 1px #aaa; }
.pin.current svg { position: relative; }
.pin.current i { width: 20px; margin-left: -10px; background: #208293; }
.tray { margin-left: auto; display: flex; align-items: center; padding-right: 27px; font-size: 15px; line-height: 20px; color: #151515; }
.lang { display: flex; flex-direction: column; text-align: center; width: 40px; margin-left: 21px; letter-spacing: -0.2px; padding-bottom: 2px; }
.wifi { margin-left: 17px; }
.spk { margin-left: 10px; }
.bat { margin-left: 10px; }
.clock { display: flex; flex-direction: column; width: 90px; margin-left: 8px; white-space: nowrap; padding-bottom: 2px; }
.clock span { align-self: flex-end; }
.bell { margin-left: 11px; }
```
